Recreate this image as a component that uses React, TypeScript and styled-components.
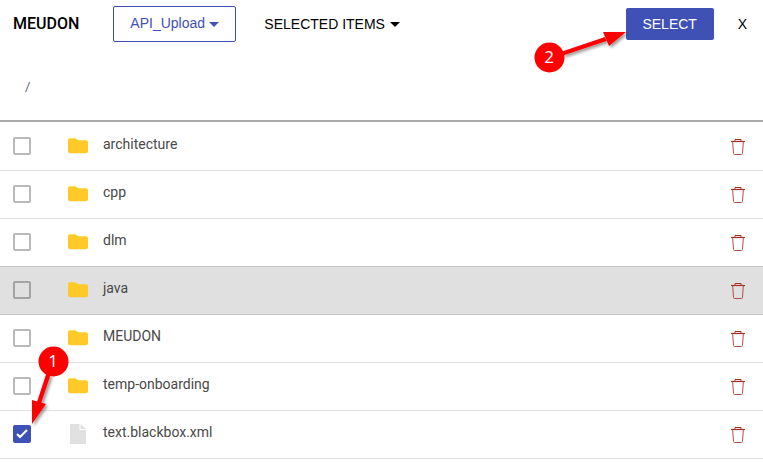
import React, { useState } from "react";
import styled, { createGlobalStyle } from "styled-components";

const GlobalStyle = createGlobalStyle`
  *, *::before, *::after { box-sizing: border-box; }
  body {
    margin: 0;
    background: #fff;
    color: #000;
    font-family: Roboto, "Liberation Sans", sans-serif;
    font-size: 14px;
  }
`;

const uiFont = `"Liberation Sans", Arial, sans-serif`;

const Page = styled.main`
  width: 100%;
`;

const Toolbar = styled.header`
  display: flex;
  align-items: center;
  height: 48px;
  padding: 0 4px 0 13px;
`;

const Title = styled.h1`
  margin: 0 34px 0 0;
  font-size: 16px;
  line-height: 24px;
  font-weight: 500;
`;

const Picker = styled.div`
  display: grid;
  align-items: center;
  height: 36px;
  border: 1px solid #3f51b5;
  border-radius: 2px;
  color: #3f51b5;

  > * {
    grid-area: 1 / 1;
  }

  > svg {
    justify-self: end;
    margin-right: 16px;
    pointer-events: none;
  }
`;

const PickerSelect = styled.select`
  appearance: none;
  height: 34px;
  margin: 0;
  padding: 0 30px 2px 16px;
  border: 0;
  background: transparent;
  color: inherit;
  font: 14px/32px ${uiFont};
  cursor: pointer;
`;

const TextButton = styled.button`
  display: flex;
  align-items: center;
  gap: 5px;
  height: 36px;
  padding: 0 12px;
  border: 0;
  background: transparent;
  color: #000;
  font: 14px/20px ${uiFont};
  cursor: pointer;
`;

const MenuButton = styled(TextButton)`
  margin-left: 16px;
`;

const Actions = styled.div`
  display: flex;
  align-items: center;
  gap: 12px;
  margin-left: auto;
`;

const CalloutAnchor = styled.div`
  position: relative;
  display: flex;
`;

const PrimaryButton = styled.button`
  min-width: 88px;
  height: 32px;
  padding: 0 16px;
  border: 0;
  border-radius: 2px;
  background: #3f51b5;
  color: #fff;
  font: 14px/32px ${uiFont};
  cursor: pointer;
`;

const Breadcrumb = styled.nav`
  display: flex;
  align-items: center;
  height: 74px;
  padding: 6px 25px 0;
  border-bottom: 2px solid #aaa;

  a {
    color: #5c6079;
    font-size: 13px;
    line-height: 16px;
    text-decoration: none;
  }
`;

const FileList = styled.ul`
  margin: 0;
  padding: 1px 0 0;
  list-style: none;
`;

const FileRow = styled.li<{ $active: boolean }>`
  display: grid;
  grid-template-columns: 53px 37px 1fr 24px;
  align-items: center;
  height: 48px;
  padding: 0 13px 1px;
  border-bottom: 1px solid ${(p) => (p.$active ? "#c4c4c4" : "#e0e0e0")};
  background: ${(p) => (p.$active ? "#e0e0e0" : "#fff")};
  box-shadow: ${(p) => (p.$active ? "0 -1px 0 #c4c4c4" : "none")};
`;

const FileLabel = styled.label`
  padding-bottom: 4px;
  color: #494949;
  line-height: 20px;
  cursor: pointer;
`;

const CheckHolder = styled.div`
  position: relative;
  display: grid;
  width: 18px;
`;

const CheckBox = styled.input<{ $active: boolean }>`
  grid-area: 1 / 1;
  appearance: none;
  width: 18px;
  height: 18px;
  margin: 0;
  border: 2px solid ${(p) => (p.$active ? "#a3a3a3" : "#b9b9b9")};
  border-radius: 2px;
  cursor: pointer;

  &:checked {
    border-color: #3f51b5;
    background: #3f51b5;
  }
`;

const TickMark = styled.svg`
  grid-area: 1 / 1;
  pointer-events: none;
`;

const DeleteButton = styled.button`
  display: flex;
  align-items: center;
  justify-content: center;
  width: 24px;
  height: 24px;
  padding: 0;
  border: 0;
  background: transparent;
  cursor: pointer;
`;

const Callout = styled.svg`
  position: absolute;
  overflow: visible;
  pointer-events: none;
`;

const CheckCallout = styled(Callout)`
  left: 18px;
  top: -80px;
`;

const SelectCallout = styled(Callout)`
  left: -92px;
  top: 22px;
`;

const CalloutText = styled.text`
  fill: #fff;
  font: 17px "Open Sans", sans-serif;
  text-anchor: middle;
`;

const Caret = () => (
  <svg width="10" height="5" viewBox="0 0 10 5" aria-hidden="true">
    <path d="M0 0h10L5 5z" fill="currentColor" />
  </svg>
);

const FolderIcon = () => (
  <svg width="24" height="24" viewBox="0 0 24 24" aria-hidden="true">
    <path
      d="M4 4.300h5c.5 0 .9.200 1.300.5L12 6.300h8c1.100 0 2 .9 2 2v9c0 1.100-.9 2-2 2H4c-1.100 0-2-.9-2-2v-11c0-1.100.9-2 2-2z"
      fill="#ffca28"
    />
  </svg>
);

const FileIcon = () => (
  <svg width="24" height="24" viewBox="0 0 24 24" aria-hidden="true">
    <path d="M4 2h9.500v6H20v14H4z" fill="#e1e1e1" />
    <path d="M14.500 2L20 7h-5.500z" fill="#e1e1e1" />
  </svg>
);

const TrashIcon = () => (
  <svg width="16" height="18" viewBox="0 0 16 18" fill="none" stroke="#ae5048" aria-hidden="true">
    <path d="M1 4.500h14" stroke="#a83028" strokeWidth="1.2" />
    <path d="M5 4V2.500h6V4" stroke="#a83028" />
    <path d="M2.700 5l.8 11.500c0 .6.300 1 .9 1h7.200c.6 0 .9-.4.900-1L13.300 5" />
  </svg>
);

const Tick = () => (
  <TickMark width="18" height="18" viewBox="0 0 18 18" aria-hidden="true">
    <path d="M4 9l3 3 7-7" fill="none" stroke="#fff" strokeWidth="2" />
  </TickMark>
);

const ArrowShadow = ({ id }: { id: string }) => (
  <filter id={id} x="-30%" y="-30%" width="170%" height="170%">
    <feDropShadow dx="2" dy="2" stdDeviation="1.5" floodColor="#000" floodOpacity="0.4" />
  </filter>
);

const CheckPointer = () => (
  <CheckCallout width="38" height="80" viewBox="0 0 38 80" role="img" aria-label="Step 1">
    <ArrowShadow id="check-shadow" />
    <g fill="#f00" filter="url(#check-shadow)">
      <path d="M15.500 28L6 57l4 1.500L19.500 30z" />
      <path d="M1 55l14 4L1 79z" />
    </g>
    <circle cx="22.5" cy="16.5" r="15" fill="#f00" />
    <CalloutText x="22" y="22">1</CalloutText>
  </CheckCallout>
);

const SelectPointer = () => (
  <SelectCallout width="94" height="44" viewBox="0 0 94 44" role="img" aria-label="Step 2">
    <ArrowShadow id="select-shadow" />
    <g fill="#f00" filter="url(#select-shadow)">
      <path d="M28 21.500L71 7l1.500 4L29 25.500z" />
      <path d="M69 2h23L75 16z" />
    </g>
    <circle cx="15.5" cy="27.5" r="15" fill="#f00" />
    <CalloutText x="15" y="33">2</CalloutText>
  </SelectCallout>
);

type Entry = { name: string; kind: "folder" | "file" };

const entries: Entry[] = [
  { name: "architecture", kind: "folder" },
  { name: "cpp", kind: "folder" },
  { name: "dlm", kind: "folder" },
  { name: "java", kind: "folder" },
  { name: "MEUDON", kind: "folder" },
  { name: "temp-onboarding", kind: "folder" },
  { name: "text.blackbox.xml", kind: "file" },
];

export default function App() {
  const [selected, setSelected] = useState<string[]>(["text.blackbox.xml"]);
  const [active, setActive] = useState("java");

  const toggle = (name: string) =>
    setSelected((names) =>
      names.includes(name) ? names.filter((n) => n !== name) : [...names, name]
    );

  return (
    <Page>
      <GlobalStyle />
      <Toolbar>
        <Title>MEUDON</Title>
        <Picker>
          <PickerSelect aria-label="Folder" defaultValue="API_Upload">
            <option>API_Upload</option>
          </PickerSelect>
          <Caret />
        </Picker>
        <MenuButton type="button" aria-haspopup="menu">
          SELECTED ITEMS
          <Caret />
        </MenuButton>
        <Actions>
          <CalloutAnchor>
            <PrimaryButton type="button">SELECT</PrimaryButton>
            <SelectPointer />
          </CalloutAnchor>
          <TextButton type="button" aria-label="Close">X</TextButton>
        </Actions>
      </Toolbar>
      <Breadcrumb aria-label="Path">
        <a href="#root">/</a>
      </Breadcrumb>
      <FileList>
        {entries.map(({ name, kind }) => {
          const isActive = name === active;
          const checked = selected.includes(name);
          return (
            <FileRow key={name} $active={isActive} onMouseEnter={() => setActive(name)}>
              <CheckHolder>
                <CheckBox
                  type="checkbox"
                  id={`pick-${name}`}
                  $active={isActive}
                  checked={checked}
                  onChange={() => toggle(name)}
                />
                {checked && <Tick />}
                {kind === "file" && <CheckPointer />}
              </CheckHolder>
              {kind === "folder" ? <FolderIcon /> : <FileIcon />}
              <FileLabel htmlFor={`pick-${name}`}>{name}</FileLabel>
              <DeleteButton type="button" aria-label={`Delete ${name}`}>
                <TrashIcon />
              </DeleteButton>
            </FileRow>
          );
        })}
      </FileList>
    </Page>
  );
}
